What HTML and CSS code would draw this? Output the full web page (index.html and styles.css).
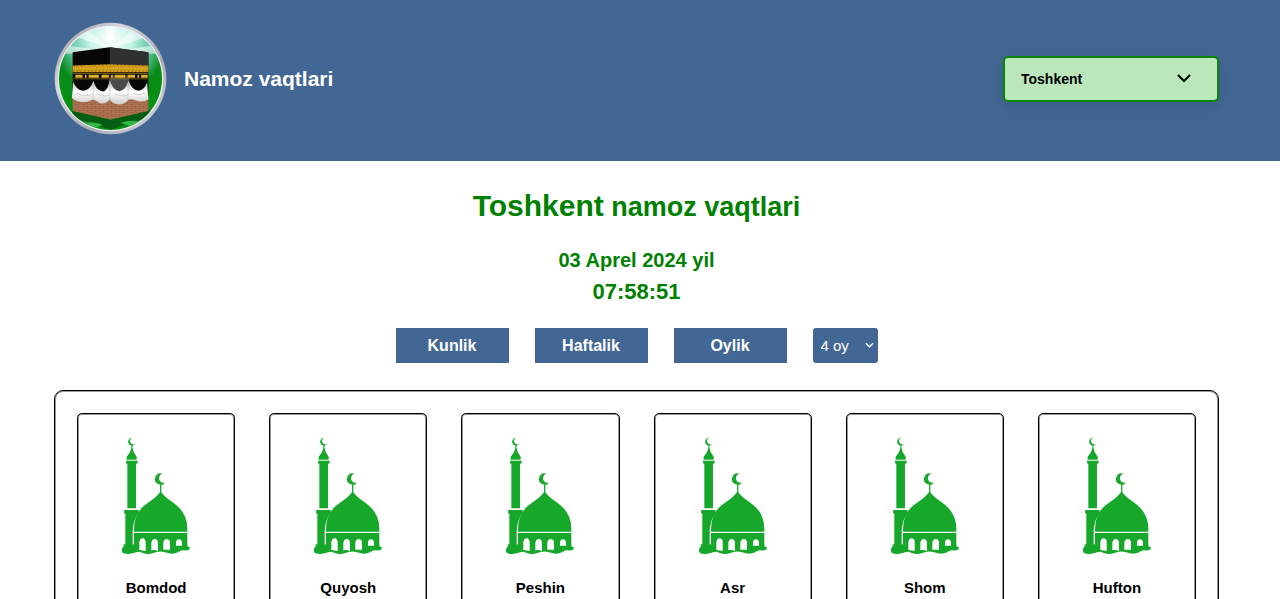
FILE: index.html
```html
<!DOCTYPE html>
<html lang="uz">
<head>
<meta charset="utf-8">
<meta name="viewport" content="width=device-width, initial-scale=1">
<title>Namoz vaqtlari</title>
<link rel="stylesheet" href="styles.css">
</head>
<body>
<svg class="sprite" aria-hidden="true">
  <symbol id="mosque" viewBox="33 21 210 360">
    <g fill="#17a82b">
      <path d="M66 23a12 12 0 1 0 10 19a9 9 0 1 1-10-19z"/>
      <path d="M64 45h3v7q2 16 13 28v9H50V80q12-12 14-28z"/>
      <path d="M48 92h35v7l-5 3v133H52V102l-4-3z"/>
      <path d="M43 240h43v9q-17 22-18 54v50H46V253l-4-5z"/>
      <path d="M157 131a17 17 0 1 0 8 27a13 13 0 1 1-8-27z"/>
      <path d="M150 164h4v23q13 17 36 31q42 29 42 78v9H72q-2-60 42-87q23-14 36-31z"/>
      <path fill-rule="evenodd" d="M72 309h160v38q2 4 7 4v7q-8 5-17 3q-9-1-18 6q-14 7-30 2q-24-9-44 0q-16 7-34-1q-8-5-18-1q-24 9-39 2q-4-3-3-13q7-6 6-13h30zM88 360v-24q2-11 10-11q8 0 9 11v27zM124 361v-22q2-12 10-12q9 0 10 12v24q-10-4-20-2zM160 359v-21q2-11 10-11q9 0 10 11v21zM198 347v-9q1-10 9-10q7 0 9 10v9z"/>
    </g>
  </symbol>
</svg>

<header class="header">
  <a class="brand" href="#">
    <svg class="brand-logo" viewBox="0 0 340 340" role="img" aria-label="Kaaba">
      <defs>
        <linearGradient id="ring" x1="0" y1="0" x2="1" y2="1">
          <stop offset="0" stop-color="#8d8e96"/><stop offset=".3" stop-color="#d4d5dc"/>
          <stop offset=".65" stop-color="#aaaab3"/><stop offset="1" stop-color="#e0e0e6"/>
        </linearGradient>
        <radialGradient id="sky" cx=".5" cy=".15" r=".62">
          <stop offset="0" stop-color="#fff"/><stop offset=".3" stop-color="#c5f3ea"/>
          <stop offset=".58" stop-color="#5cc3a0"/><stop offset=".8" stop-color="#078a17"/><stop offset="1" stop-color="#069014"/>
        </radialGradient>
        <linearGradient id="cloth" x1="0" y1="0" x2="0" y2="1">
          <stop offset="0" stop-color="#aaa"/><stop offset=".5" stop-color="#fff"/><stop offset="1" stop-color="#ccc"/>
        </linearGradient>
        <pattern id="brick" width="24" height="12" patternUnits="userSpaceOnUse">
          <path fill="#b57a58" d="M0 0h24v12H0z"/>
          <path d="M0 1h24M0 7h24M5 1v6M17 7v5" stroke="#7c4a33" stroke-width="1.5"/>
        </pattern>
        <pattern id="braid" width="11" height="20" patternUnits="userSpaceOnUse">
          <path fill="#d9a51e" d="M0 0h11v20H0z"/><path d="M1 5l5 4l-5 4M7 3v3M7 14v3" stroke="#76550a" stroke-width="2" fill="none"/>
        </pattern>
        <clipPath id="disc"><circle cx="170" cy="170" r="155"/></clipPath>
      </defs>
      <circle cx="170" cy="170" r="168" fill="url(#ring)"/>
      <circle cx="170" cy="170" r="159" fill="#ededf2"/>
      <g clip-path="url(#disc)">
        <path fill="url(#sky)" d="M0 0h340v340H0z"/>
        <path fill="#fff" opacity=".55" d="M170 80L90 15l-30 28zM170 80l-22-80h44zM170 80l75-65l34 30zM170 90L38 70l-16 26zM170 90l132-20l16 26z"/>
        <path fill="#035d13" d="M60 264l110 30l118-30l10 18l-128 42L45 284z"/>
        <path fill="#35b748" d="M85 305q35-8 62 5l-22 8zM200 304q32-12 58-3l-30 11z"/>
        <path fill="url(#brick)" d="M56 222h228v46l-114 25l-114-25z"/>
        <path fill="#070707" d="M56 91l111-15l117 15v130H56z"/>
        <path fill="#303030" d="M168 76l116 15v40l-116-4z"/>
        <path fill="#4a4a4a" d="M168 160h58v60h-58z"/>
        <path fill="url(#braid)" d="M56 131l112-4l116 4v20H56z"/>
        <path stroke="#ddb024" stroke-width="9" stroke-dasharray="22 7 5 6 31 8" d="M64 163h218" fill="none"/>
        <path stroke="#a98018" stroke-width="2" d="M56 155h228M56 171h228"/>
        <path fill="url(#cloth)" d="M58 180q8 25 30 27q21-1 31-30q6 30 27 32q17-2 22-37q7 33 29 36q19-2 27-32q10 29 31 31q18-4 25-26l4 52q-17 10-37 3q-14-5-22-3q-14 16-32 15q-16-1-25-15q-14 16-31 11q-11-9-20-11q-19 11-39 7q-18-4-24-12q2-24 4-48z"/>
        <path stroke="#a8a8a8" stroke-width="2" fill="none" opacity=".65" d="M68 213q17 12 43 7M119 188l-2 42M128 213q17 14 38 8M168 180v60M183 215q22 12 38 5M224 185l-2 45M239 215q18 8 36-2"/>
      </g>
    </svg>
    <span class="brand-name">Namoz vaqtlari</span>
  </a>
  <div class="region">
    <select class="region-select" aria-label="Shahar">
      <option>Toshkent</option><option>Samarqand</option><option>Buxoro</option>
    </select>
    <svg class="region-arrow" viewBox="0 0 14 9" aria-hidden="true"><path d="M1 1l6 6l6-6"/></svg>
  </div>
</header>

<main class="main">
  <h1 class="title"><span class="title-city">Toshkent</span> namoz vaqtlari</h1>
  <p class="date">03 Aprel 2024 yil</p>
  <p class="clock">07:58:51</p>
  <div class="controls">
    <button class="period" type="button">Kunlik</button>
    <button class="period" type="button">Haftalik</button>
    <button class="period" type="button">Oylik</button>
    <div class="month">
      <select class="month-select" aria-label="Oy"><option>4 oy</option><option>5 oy</option></select>
      <svg class="month-arrow" viewBox="0 0 10 7" aria-hidden="true"><path d="M1 1l4 4l4-4"/></svg>
    </div>
  </div>
  <section class="times">
    <article class="card"><svg class="card-icon" aria-hidden="true"><use href="#mosque"/></svg><h2 class="card-name">Bomdod</h2></article>
    <article class="card"><svg class="card-icon" aria-hidden="true"><use href="#mosque"/></svg><h2 class="card-name">Quyosh</h2></article>
    <article class="card"><svg class="card-icon" aria-hidden="true"><use href="#mosque"/></svg><h2 class="card-name">Peshin</h2></article>
    <article class="card"><svg class="card-icon" aria-hidden="true"><use href="#mosque"/></svg><h2 class="card-name">Asr</h2></article>
    <article class="card"><svg class="card-icon" aria-hidden="true"><use href="#mosque"/></svg><h2 class="card-name">Shom</h2></article>
    <article class="card"><svg class="card-icon" aria-hidden="true"><use href="#mosque"/></svg><h2 class="card-name">Hufton</h2></article>
  </section>
</main>
</body>
</html>
```

FILE: styles.css
```css
* {
  box-sizing: border-box;
}

body {
  margin: 0;
  background: #fff;
  color: #000;
  font-family: "Liberation Sans", Arial, sans-serif;
}

.sprite {
  display: none;
}

.header {
  display: flex;
  align-items: center;
  justify-content: space-between;
  padding: 22px 61px 26px 54px;
  background: #436794;
}

.brand {
  display: flex;
  align-items: center;
  gap: 17px;
  color: #fff;
  text-decoration: none;
}

.brand-logo {
  width: 113px;
  height: 113px;
}

.brand-name {
  font-size: 21px;
  font-weight: 700;
}

.region,
.month {
  display: grid;
  align-items: center;
}

.region-select,
.region-arrow,
.month-select,
.month-arrow {
  grid-area: 1 / 1;
}

.region-select {
  appearance: none;
  width: 216px;
  height: 46px;
  padding: 0 16px;
  border: 2px solid #0a860a;
  border-radius: 5px;
  background: #bbe7bb;
  box-shadow: 0 5px 16px rgba(0, 0, 0, 0.12);
  color: #000;
  font: 700 14px "Liberation Sans", Arial, sans-serif;
}

.region-arrow,
.month-arrow {
  justify-self: end;
  fill: none;
  pointer-events: none;
}

.region-arrow {
  width: 14px;
  height: 9px;
  margin-right: 28px;
  stroke: #000;
  stroke-width: 2;
}

.main {
  padding: 25px 61px 24px 54px;
  text-align: center;
}

.title,
.date,
.clock {
  margin: 0;
  color: #008000;
  font-weight: 700;
}

.title {
  font-size: 27px;
  line-height: 40px;
}

.title-city {
  font-size: 30px;
}

.date {
  margin-top: 17px;
  font-size: 20px;
  line-height: 32px;
}

.clock {
  font-size: 22px;
  line-height: 32px;
}

.controls {
  display: flex;
  justify-content: center;
  gap: 26px;
  margin: 20px 0 27px;
}

.period {
  width: 113px;
  height: 35px;
  padding: 0;
  border: 0;
  background: #436794;
  color: #fff;
  font: 700 16px "Liberation Sans", Arial, sans-serif;
}

.month-select {
  appearance: none;
  width: 65px;
  height: 35px;
  padding: 0 8px;
  border: 0;
  border-radius: 3px;
  background: #436794;
  color: #fff;
  font: 15px "Liberation Sans", Arial, sans-serif;
}

.month-arrow {
  width: 9px;
  height: 7px;
  margin-right: 4px;
  stroke: #fff;
  stroke-width: 1.5;
}

.times {
  display: grid;
  grid-template-columns: repeat(6, 1fr);
  gap: 34px;
  padding: 22px;
  border: 1px solid #000;
  border-radius: 9px;
  box-shadow: inset 0 0 0 1px rgba(0, 0, 0, 0.4);
}

.card {
  display: flex;
  flex-direction: column;
  align-items: center;
  padding: 23px 10px;
  border: 1px solid #000;
  border-radius: 5px;
  box-shadow: inset 0 0 0 1px rgba(0, 0, 0, 0.4);
}

.card-icon {
  width: 70px;
  height: 120px;
}

.card-name {
  margin: 21px 0 0;
  font-size: 15px;
  line-height: 20px;
}
```
